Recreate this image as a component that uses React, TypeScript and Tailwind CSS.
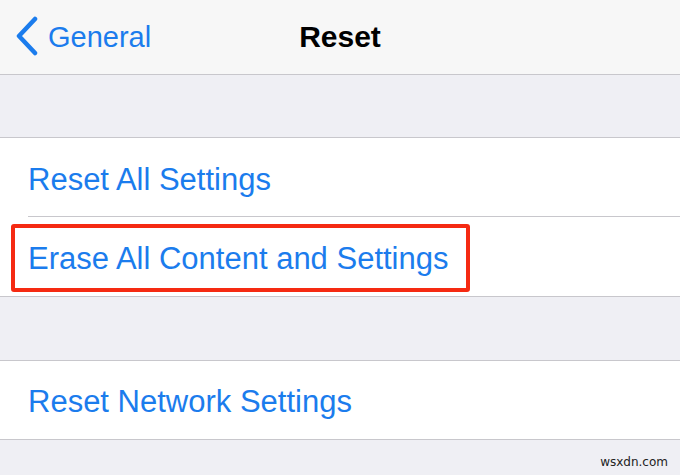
import React from "react";

function Row({ text, sep, h }: { text: string; sep?: boolean; h: string }) {
  return (
    <div className={`relative bg-white flex items-center pl-[28px] pt-[3px] ${h}`}>
      <span className="text-[31px] leading-none text-[#1b7ced]">{text}</span>
      {sep && <div className="absolute left-[28px] right-0 bottom-0 h-px bg-[#c8c7cc]" />}
    </div>
  );
}

export default function App() {
  return (
    <div
      className="w-[680px] h-[475px] bg-[#efeff4] flex flex-col overflow-hidden relative"
      style={{ fontFamily: '"Liberation Sans", Arial, sans-serif' }}
    >
      <div className="h-[75px] bg-[#f7f7f7] border-b border-[#c8c7cc] flex items-center relative shrink-0">
        <div className="flex items-center pl-[15px] gap-[9px]">
          <svg width="24" height="40" viewBox="0 0 24 40" className="mt-[-2px]">
            <path d="M20 3 L4 20 L20 37" fill="none" stroke="#1b7ced" strokeWidth="4.5" strokeLinecap="round" strokeLinejoin="round" />
          </svg>
          <span className="text-[29px] leading-none text-[#1b7ced]">General</span>
        </div>
        <div className="absolute inset-x-0 top-0 h-full flex items-center justify-center pointer-events-none">
          <span className="text-[30px] leading-none font-bold text-black">Reset</span>
        </div>
      </div>
      <div className="h-[62px] shrink-0" />
      <div className="border-y border-[#c8c7cc] shrink-0">
        <Row text="Reset All Settings" sep h="h-[79px]" />
        <div className="relative">
          <Row text="Erase All Content and Settings" h="h-[79px]" />
          <div className="absolute left-[11px] top-[7px] w-[459px] h-[68px] border-[4px] border-[#f52a12] rounded-[3px]" />
        </div>
      </div>
      <div className="h-[63px] shrink-0" />
      <div className="border-y border-[#c8c7cc] shrink-0">
        <Row text="Reset Network Settings" h="h-[78px]" />
      </div>
      <div className="absolute right-[12px] bottom-[7px] text-[12px] leading-none text-[#222]" style={{ fontFamily: '"DejaVu Sans", sans-serif' }}>
        wsxdn.com
      </div>
    </div>
  );
}
